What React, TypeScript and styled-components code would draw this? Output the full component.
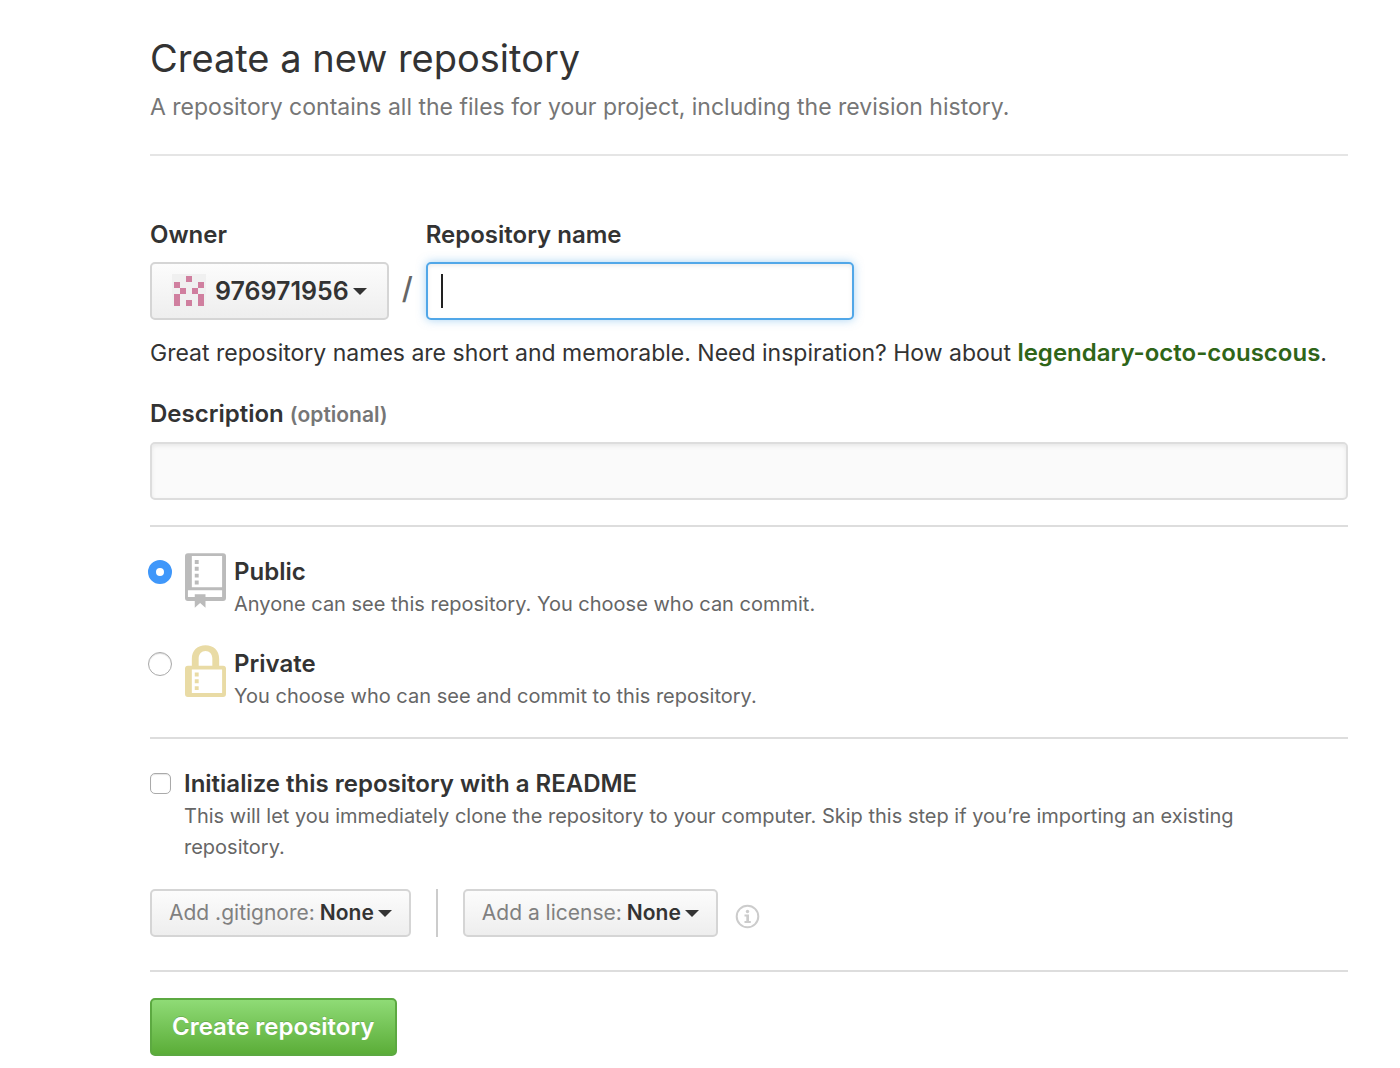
import React from "react";
import styled, { createGlobalStyle } from "styled-components";

const GlobalStyle = createGlobalStyle`
  *, *::before, *::after { box-sizing: border-box; }
  body {
    margin: 0;
    background: #fff;
    color: #333;
    font-family: Inter, "Liberation Sans", sans-serif;
    font-size: 24px;
    line-height: 32px;
  }
`;

const Page = styled.main`
  padding: 34px 52px 12px 150px;
`;

const Header = styled.header`
  padding-bottom: 30px;
  border-bottom: 2px solid #e5e5e5;
`;

const Title = styled.h1`
  margin: 0 0 8px;
  font-size: 38px;
  line-height: 48px;
  font-weight: 400;
`;

const Lead = styled.p`
  margin: 0;
  font-size: 23px;
  line-height: 34px;
  color: #767676;
`;

const Form = styled.form`
  display: flex;
  flex-direction: column;
  padding-top: 63px;
`;

const NameRow = styled.div`
  display: flex;
  align-items: flex-end;
`;

const Field = styled.div`
  display: flex;
  flex-direction: column;
  align-items: flex-start;
  gap: 11px;
`;

const Label = styled.label`
  font-size: 24px;
  line-height: 32px;
  font-weight: 600;
`;

const Optional = styled.span`
  font-size: 21px;
  color: #767676;
`;

const SelectBox = styled.div<{ $large?: boolean }>`
  display: flex;
  align-items: center;
  height: ${(p) => (p.$large ? 58 : 48)}px;
  padding: 0 ${(p) => (p.$large ? 20 : 17)}px;
  border: 2px solid #d5d5d5;
  border-radius: 5px;
  background: linear-gradient(#fcfcfc, #eee);
  font-size: ${(p) => (p.$large ? 25 : 21)}px;
`;

const SelectLabel = styled.label`
  margin-right: 5px;
  color: #808080;
`;

const Select = styled.select`
  appearance: none;
  field-sizing: content;
  padding: 0;
  border: 0;
  outline: 0;
  background: transparent;
  color: #333;
  font: inherit;
  font-weight: 600;
  cursor: pointer;
`;

const Arrow = styled.span`
  margin: 1px 0 0 4px;
  border: 7px solid transparent;
  border-top-color: #333;
  border-bottom: 0;
`;

const Avatar = styled.svg`
  width: 34px;
  height: 34px;
  margin-right: 9px;
`;

const Slash = styled.span`
  width: 37px;
  line-height: 64px;
  font-size: 30px;
  font-weight: 500;
  text-align: center;
  color: #666;
`;

const NameBox = styled.div`
  position: relative;
  width: 428px;
`;

const TextInput = styled.input<{ $active?: boolean }>`
  display: block;
  width: 100%;
  height: 58px;
  padding: 0 14px;
  outline: 0;
  border: 2px solid ${(p) => (p.$active ? "#51a7e8" : "#ddd")};
  border-radius: 5px;
  background: ${(p) => (p.$active ? "#fff" : "#fafafa")};
  box-shadow: inset 0 2px 4px rgba(0, 0, 0, 0.075)${(p) =>
    p.$active ? ", 0 0 10px rgba(81, 167, 232, 0.5)" : ""};
  caret-color: transparent;
  color: #333;
  font: inherit;
`;

const TextCursor = styled.span`
  position: absolute;
  top: 12px;
  left: 15px;
  width: 2px;
  height: 34px;
  background: #222;
  pointer-events: none;
`;

const Hint = styled.p`
  margin: 16px 0 28px;
  font-size: 23px;
  line-height: 34px;
`;

const Suggestion = styled.a`
  color: #2f6518;
  font-size: 24px;
  font-weight: 600;
  text-decoration: none;
`;

const FullField = styled.div`
  display: flex;
  flex-direction: column;
  gap: 11px;
`;

const Rule = styled.hr`
  width: 100%;
  height: 2px;
  margin: 25px 0 26px;
  border: 0;
  background: #ddd;
`;

const Choices = styled.div`
  display: flex;
  flex-direction: column;
  gap: 25px;
`;

const Choice = styled.div`
  display: grid;
  grid-template-columns: 35px 49px 1fr;
  align-items: start;
`;

const ChoiceText = styled.div`
  padding-top: 3px;
`;

const Radio = styled.input`
  appearance: none;
  width: 24px;
  height: 24px;
  margin: 7px 0 0 -2px;
  border: 1px solid #aaa;
  border-radius: 50%;
  background: #fff;
  box-shadow: inset 0 1px 1px rgba(0, 0, 0, 0.15);

  &:checked {
    border: 8px solid #3f97fa;
    box-shadow: none;
  }
`;

const Checkbox = styled.input`
  appearance: none;
  width: 21px;
  height: 21px;
  margin: 5px 0 0;
  border: 1px solid #aaa;
  border-radius: 5px;
  background: #fff;
  box-shadow: inset 0 1px 1px rgba(0, 0, 0, 0.1);
`;

const Icon = styled.svg<{ $color: string }>`
  display: block;
  width: 41px;
  height: 55px;
  fill: ${(p) => p.$color};
`;

const Note = styled.p`
  margin: 1px 0 0;
  font-size: 20px;
  line-height: 31px;
  color: #666;
`;

const Readme = styled.div`
  display: grid;
  grid-template-columns: 34px 1fr;
  align-items: start;
  padding: 3px 34px 26px 0;
`;

const Options = styled.div`
  display: flex;
  align-items: center;
`;

const Divider = styled.span`
  width: 2px;
  height: 48px;
  margin: 0 25px;
  background: #ccc;
`;

const InfoButton = styled.button`
  display: flex;
  margin: 6px 0 0 17px;
  padding: 0;
  border: 0;
  background: transparent;
`;

const BottomRule = styled(Rule)`
  margin-top: 33px;
`;

const Submit = styled.button`
  align-self: flex-start;
  height: 58px;
  padding: 0 20px;
  border: 2px solid #5ca941;
  border-radius: 5px;
  background: linear-gradient(#8fdb76, #5bad38);
  color: #fff;
  font: inherit;
  font-weight: 600;
  font-size: 24px;
  text-shadow: 0 -1px 0 rgba(0, 0, 0, 0.15);
  cursor: pointer;
`;

const avatarCells = [
  [2, 0], [0, 1], [4, 1], [1, 2], [3, 2], [0, 3], [4, 3], [0, 4], [2, 4], [4, 4],
];

function Identicon() {
  return (
    <Avatar viewBox="0 0 34 34" aria-hidden="true">
      <rect width="34" height="34" fill="#f0f0f0" />
      {avatarCells.map(([x, y]) => (
        <rect key={`${x}-${y}`} x={2 + x * 6} y={2 + y * 6} width="6" height="6" fill="#d07f9f" />
      ))}
    </Avatar>
  );
}

function RepoIcon() {
  return (
    <Icon $color="#bbb" viewBox="0 0 42 56" aria-hidden="true">
      <path
        fillRule="evenodd"
        d="M3 0H39Q42 0 42 3V46Q42 49 39 49H21V56L15.500 51L10 56V49H3Q0 49 0 46V3Q0 0 3 0ZM7 3V35H38V3ZM3 38V45H10V42H21V45H38V38Z"
      />
      <path d="M10 7h4v4h-4zM10 14h4v4h-4zM10 21h4v4h-4zM10 28h4v4h-4z" />
    </Icon>
  );
}

function LockIcon() {
  return (
    <Icon $color="#e9dba5" viewBox="0 0 42 56" aria-hidden="true">
      <path
        fillRule="evenodd"
        d="M7 21V14C7 5 13 0 21 0S35 5 35 14V21H39Q42 21 42 24V50Q42 53 39 53H3Q0 53 0 50V24Q0 21 3 21ZM14 21H28V14C28 9 25 6 21 6S14 9 14 14ZM7 25V49H38V25Z"
      />
      <path d="M10 28h4v4h-4zM10 35h4v4h-4zM10 42h4v4h-4z" />
    </Icon>
  );
}

function InfoIcon() {
  return (
    <svg width="25" height="25" viewBox="0 0 25 25" aria-hidden="true">
      <circle cx="12.500" cy="12.500" r="10.800" fill="none" stroke="#ccc" strokeWidth="2" />
      <circle cx="12.500" cy="7.500" r="1.700" fill="#ccc" />
      <path fill="#ccc" d="M9.500 10.500h4.500v6.500h1.800v2H9.500v-2h1.800v-4.500H9.500z" />
    </svg>
  );
}

interface VisibilityProps {
  id: string;
  title: string;
  note: string;
  icon: React.ReactNode;
  checked?: boolean;
}

function Visibility({ id, title, note, icon, checked }: VisibilityProps) {
  return (
    <Choice>
      <Radio type="radio" name="visibility" id={id} defaultChecked={checked} />
      {icon}
      <ChoiceText>
        <Label htmlFor={id}>{title}</Label>
        <Note>{note}</Note>
      </ChoiceText>
    </Choice>
  );
}

export default function App() {
  return (
    <>
      <GlobalStyle />
      <Page>
        <Header>
          <Title>Create a new repository</Title>
          <Lead>A repository contains all the files for your project, including the revision history.</Lead>
        </Header>
        <Form onSubmit={(e) => e.preventDefault()}>
          <NameRow>
            <Field>
              <Label htmlFor="owner">Owner</Label>
              <SelectBox $large>
                <Identicon />
                <Select id="owner">
                  <option>976971956</option>
                </Select>
                <Arrow />
              </SelectBox>
            </Field>
            <Slash>/</Slash>
            <Field>
              <Label htmlFor="name">Repository name</Label>
              <NameBox>
                <TextInput id="name" type="text" $active />
                <TextCursor />
              </NameBox>
            </Field>
          </NameRow>
          <Hint>
            Great repository names are short and memorable. Need inspiration? How about{" "}
            <Suggestion href="#name">legendary-octo-couscous</Suggestion>.
          </Hint>
          <FullField>
            <Label htmlFor="description">
              Description <Optional>(optional)</Optional>
            </Label>
            <TextInput id="description" type="text" />
          </FullField>
          <Rule />
          <Choices>
            <Visibility
              id="public"
              title="Public"
              note="Anyone can see this repository. You choose who can commit."
              icon={<RepoIcon />}
              checked
            />
            <Visibility
              id="private"
              title="Private"
              note="You choose who can see and commit to this repository."
              icon={<LockIcon />}
            />
          </Choices>
          <Rule />
          <Readme>
            <Checkbox type="checkbox" id="readme" />
            <div>
              <Label htmlFor="readme">Initialize this repository with a README</Label>
              <Note>
                This will let you immediately clone the repository to your computer. Skip this step if
                you’re importing an existing repository.
              </Note>
            </div>
          </Readme>
          <Options>
            <SelectBox>
              <SelectLabel htmlFor="gitignore">Add .gitignore:</SelectLabel>
              <Select id="gitignore">
                <option>None</option>
              </Select>
              <Arrow />
            </SelectBox>
            <Divider />
            <SelectBox>
              <SelectLabel htmlFor="license">Add a license:</SelectLabel>
              <Select id="license">
                <option>None</option>
              </Select>
              <Arrow />
            </SelectBox>
            <InfoButton type="button" aria-label="About licenses">
              <InfoIcon />
            </InfoButton>
          </Options>
          <BottomRule />
          <Submit type="submit">Create repository</Submit>
        </Form>
      </Page>
    </>
  );
}
